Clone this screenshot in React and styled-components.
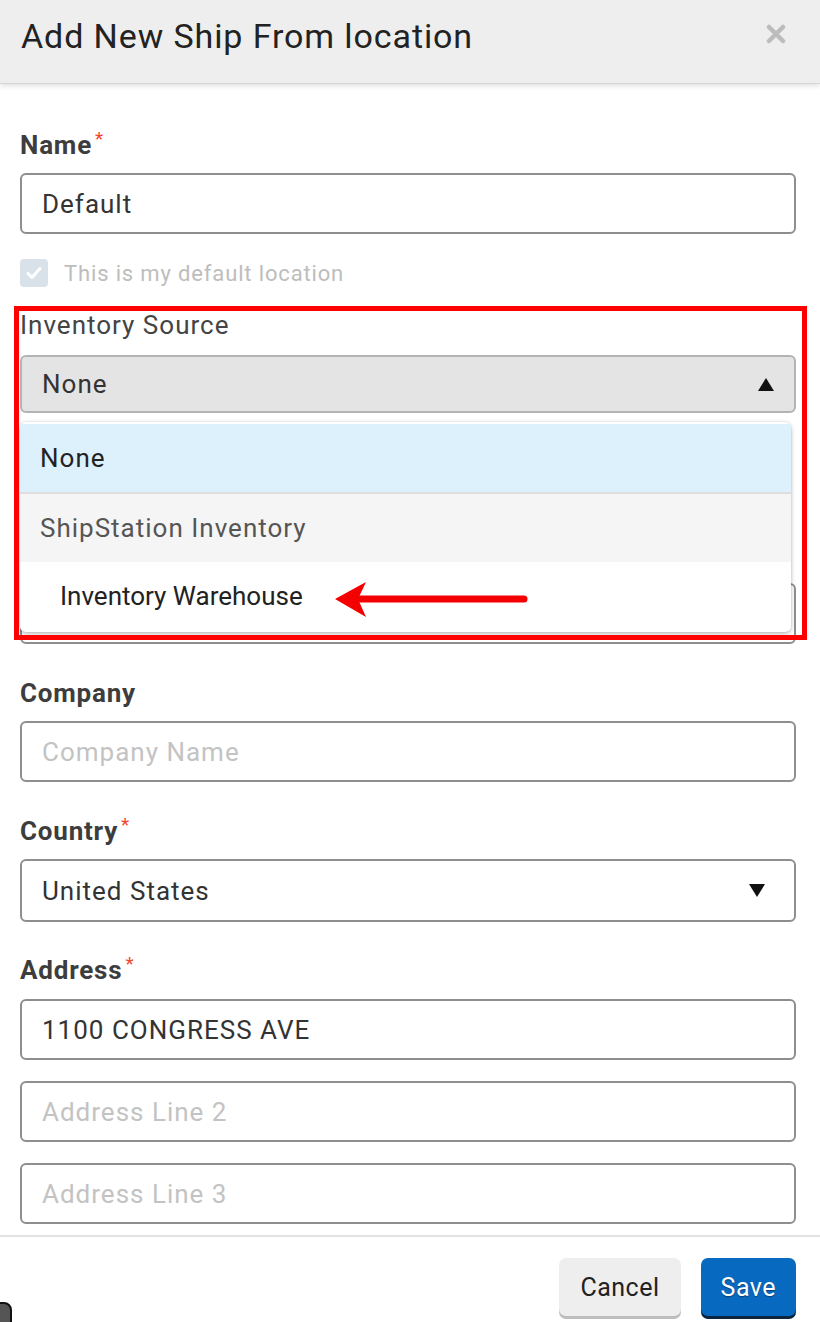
import React from "react";
import styled, { createGlobalStyle } from "styled-components";

const GlobalStyle = createGlobalStyle`
  body {
    margin: 0;
    background: #ffffff;
    font-family: Roboto, "Liberation Sans", sans-serif;
  }
`

const Modal = styled.div`
  position: relative;
  width: 820px;
  height: 1322px;
  overflow: hidden;
  display: flex;
  flex-direction: column;
  background: #fff;
`

const Header = styled.div`
  height: 84px;
  box-sizing: border-box;
  padding: 14px 34px 0 21px;
  display: flex;
  justify-content: space-between;
  align-items: flex-start;
  background: #eeeeee;
  border-bottom: 1px solid #d6d6d6;
  box-shadow: 0 2px 5px rgba(0, 0, 0, 0.12);
  position: relative;
  z-index: 1;
`

const Title = styled.h1`
  margin: 0;
  font-size: 34px;
  letter-spacing: 0.9px;
  line-height: 44px;
  font-weight: 400;
  color: #222;
`

const Close = styled.button`
  border: 0;
  background: none;
  padding: 0;
  margin-top: 10px;
  width: 20px;
  height: 20px;
  cursor: pointer;
`

const Body = styled.div`
  padding: 0 24px 0 20px;
  display: flex;
  flex-direction: column;
`

const Field = styled.div`
  position: relative;
  display: flex;
  flex-direction: column;
  gap: ${p => p.$gap ?? 13}px;
  margin-top: ${p => p.$top}px;
`

const Label = styled.label`
  min-height: 30px;
  font-size: 26px;
  letter-spacing: ${p => (p.$plain ? 1 : 0.8)}px;
  line-height: 30px;
  font-weight: ${p => (p.$plain ? 400 : 700)};
  color: ${p => (p.$plain ? "#444" : "#3d3d3d")};
  display: flex;
  align-items: flex-start;
`

const Req = styled.span`
  color: #f0462d;
  font-size: 19px;
  line-height: 18px;
  font-weight: 400;
  margin-left: 3px;
`

const Input = styled.div`
  height: ${p => p.$h ?? 61}px;
  box-sizing: border-box;
  border: 2px solid ${p => (p.$open ? "#b4b4b4" : "#8e8e8e")};
  border-radius: 6px;
  background: ${p => (p.$open ? "#e4e4e4" : "#fff")};
  padding: 0 20px;
  display: flex;
  align-items: center;
  justify-content: space-between;
  font-size: 26px;
  letter-spacing: 1px;
  color: ${p => (p.$placeholder ? "#c3c3c3" : "#333")};
`

const Caret = styled.span`
  width: 0;
  height: 0;
  border-left: 8px solid transparent;
  border-right: 8px solid transparent;
  ${p => (p.$up ? "border-bottom: 13px solid #111;" : "border-top: 13px solid #111;")}
  margin-right: ${p => p.$right}px;
`

const CheckRow = styled.div`
  margin-top: 25px;
  display: flex;
  align-items: center;
  gap: 16px;
  font-size: 22px;
  letter-spacing: 0.85px;
  color: #bdbdbd;
`

const CheckBox = styled.span`
  width: 28px;
  height: 28px;
  border-radius: 4px;
  background: #dae2e9;
  display: flex;
  align-items: center;
  justify-content: center;
`

const Menu = styled.ul`
  position: absolute;
  top: 112px;
  left: 0;
  width: 771px;
  margin: 0;
  padding: 2px 0;
  list-style: none;
  background: #fff;
  border-radius: 6px;
  box-shadow: 0 2px 5px rgba(0, 0, 0, 0.25), 0 0 2px rgba(0, 0, 0, 0.15);
  z-index: 2;
  overflow: hidden;
`

const Option = styled.li`
  box-sizing: border-box;
  display: flex;
  align-items: center;
  padding-left: ${p => p.$indent}px;
  font-size: 26px;
  letter-spacing: ${p => p.$spacing ?? 1}px;
  color: ${p => p.$color};
  background: ${p => p.$bg};
  border-bottom: ${p => (p.$divider ? "2px solid #dedede" : "0")};
  height: ${p => (p.$divider ? 70 : 68)}px;
`

const Highlight = styled.div`
  position: absolute;
  top: 306px;
  left: 14px;
  width: 793px;
  height: 334px;
  box-sizing: border-box;
  border: 5px solid #ff0000;
  z-index: 3;
  pointer-events: none;
`

const Arrow = styled.svg`
  position: absolute;
  top: 570px;
  left: 320px;
  z-index: 3;
`

const Footer = styled.div`
  margin-top: 11px;
  border-top: 2px solid #e2e2e2;
  padding: 21px 24px 0 20px;
  display: flex;
  justify-content: flex-end;
  gap: 20px;
`

const Button = styled.button`
  height: 58px;
  padding: 0 ${p => (p.$primary ? 20 : 21)}px;
  border: 0;
  border-radius: 7px;
  font-family: inherit;
  font-size: 25px;
  letter-spacing: 0.5px;
  background: ${p => (p.$primary ? "#0769c0" : "#eeeeee")};
  color: ${p => (p.$primary ? "#fff" : "#222")};
  box-shadow: 0 3px 0 ${p => (p.$primary ? "#0b2540" : "#bdbdbd")};
  text-shadow: ${p => (p.$primary ? "0 1px 1px rgba(0,0,0,0.4)" : "none")};
  cursor: pointer;
`

const Corner = styled.div`
  position: absolute;
  left: -8px;
  bottom: -10px;
  width: 16px;
  height: 26px;
  border: 2px solid #111;
  border-radius: 8px;
  background: #555;
`

export default function App() {
  return (
    <>
      <GlobalStyle />
      <Modal>
        <Header>
          <Title>Add New Ship From location</Title>
          <Close aria-label="Close">
            <svg width="20" height="20" viewBox="0 0 20 20">
              <path d="M3 3 L17 17 M17 3 L3 17" stroke="#bcbcbc" strokeWidth="4.5" strokeLinecap="round" />
            </svg>
          </Close>
        </Header>
        <Body>
          <Field $top={46}>
            <Label>Name<Req>*</Req></Label>
            <Input>Default</Input>
          </Field>
          <CheckRow>
            <CheckBox>
              <svg width="18" height="18" viewBox="0 0 18 18">
                <path d="M3 9.5 L7 13.5 L15 4.5" fill="none" stroke="#fff" strokeWidth="3" strokeLinecap="round" strokeLinejoin="round" />
              </svg>
            </CheckBox>
            This is my default location
          </CheckRow>
          <Field $top={23} $gap={15}>
            <Label $plain>Inventory Source</Label>
            <Input $open $h={58}>
              None
              <Caret $up $right={0} />
            </Input>
            <Menu>
              <Option $indent={20} $color="#222" $bg="#dcf1fc" $divider>None</Option>
              <Option $indent={20} $color="#555" $bg="#f5f5f5">ShipStation Inventory</Option>
              <Option $indent={40} $color="#222" $bg="#fff" $spacing={0}>Inventory Warehouse</Option>
            </Menu>
          </Field>
          {/* field hidden under the open menu */}
          <Field $top={127}>
            <Label />
            <Input />
          </Field>
          <Field $top={34}>
            <Label>Company</Label>
            <Input $placeholder>Company Name</Input>
          </Field>
          <Field $top={34}>
            <Label>Country<Req>*</Req></Label>
            <Input $h={63}>
              United States
              <Caret $right={9} />
            </Input>
          </Field>
          <Field $top={33} $gap={14}>
            <Label>Address<Req>*</Req></Label>
            <Input>1100 CONGRESS AVE</Input>
          </Field>
          <Field $top={21}>
            <Input $placeholder>Address Line 2</Input>
          </Field>
          <Field $top={21}>
            <Input $placeholder>Address Line 3</Input>
          </Field>
        </Body>
        <Footer>
          <Button>Cancel</Button>
          <Button $primary>Save</Button>
        </Footer>
        <Highlight />
        <Arrow width="220" height="60" viewBox="320 570 220 60">
          <path d="M352 599 L524 599" stroke="#f50000" strokeWidth="7" strokeLinecap="round" />
          <path d="M335 599 L366 582 L358 599 L366 617 Z" fill="#f50000" />
        </Arrow>
        <Corner />
      </Modal>
    </>
  );
}
